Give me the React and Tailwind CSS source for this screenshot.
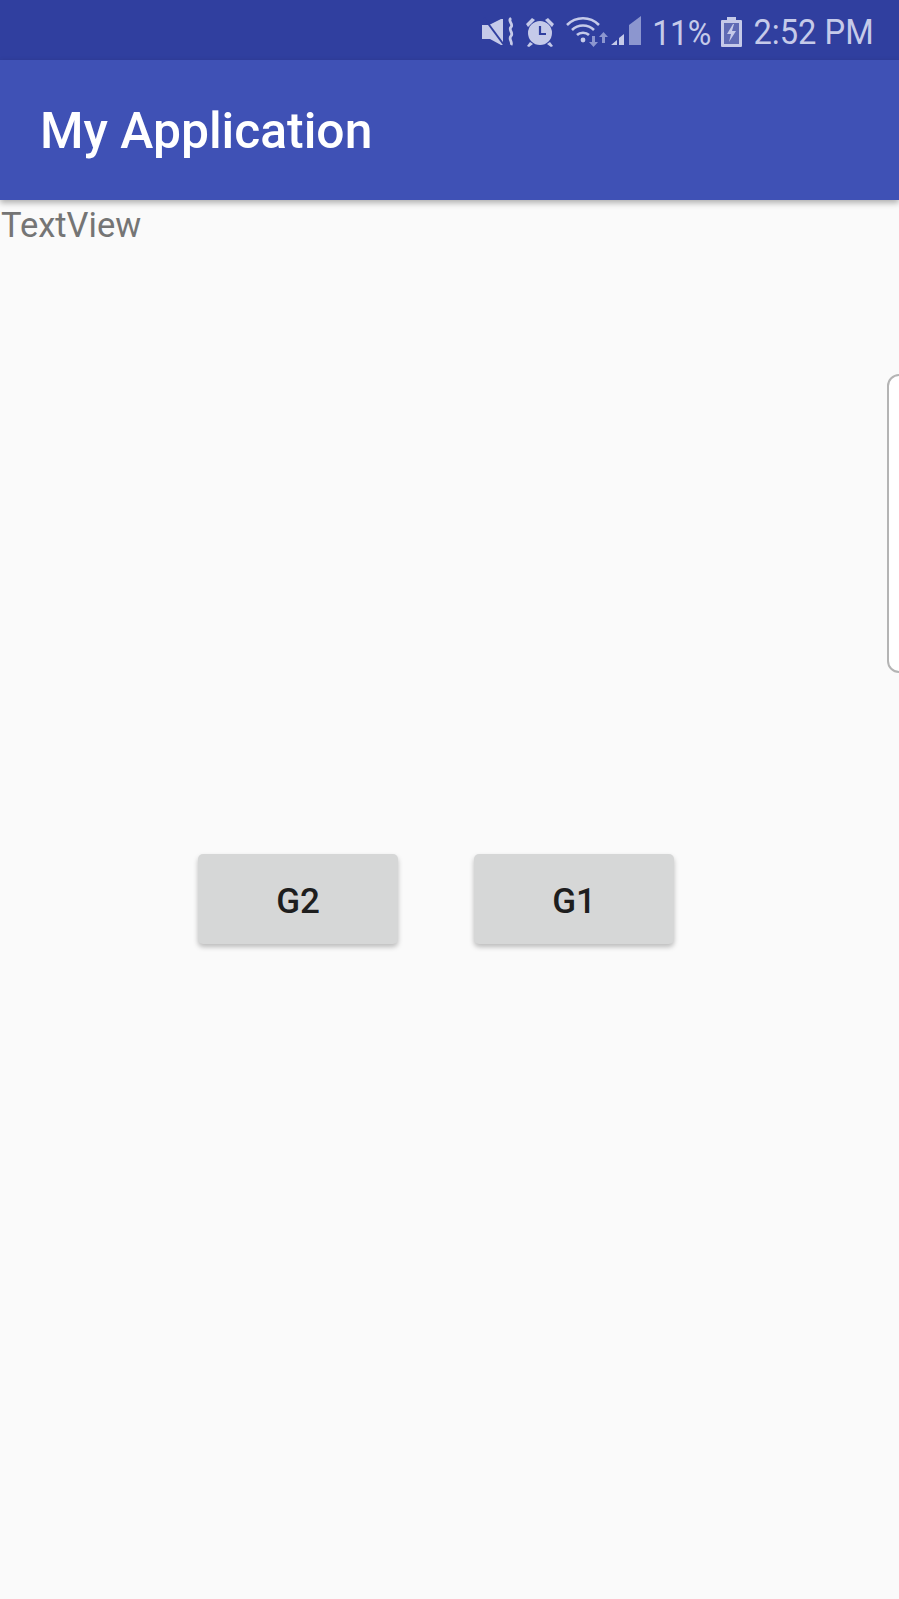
export default function App() {
  const ic = "#c5cae9";
  return (
    <div className="relative w-[899px] h-[1599px] overflow-hidden bg-[#fafafa] font-['Roboto',sans-serif]">
      <div className="h-[60px] bg-[#303f9f] flex items-center justify-end pt-[4px] pr-[25px] text-[#c5cae9]">
        <svg width="34" height="32" viewBox="0 0 34 32" className="mr-[9px]">
          <path d="M1 9h7l12-6h2v26h-2l-11-6H1z" fill={ic} />
          <path d="M3 2l20 27" fill="none" stroke="#303f9f" strokeWidth="2" />
          <path d="M30 2c-4 3 3 6 0 9s3 6 0 9 2 6 0 9" fill="none" stroke={ic} strokeWidth="2.8" />
        </svg>
        <svg width="32" height="32" viewBox="0 0 32 32" className="mr-[10px]">
          <circle cx="16" cy="17" r="12" fill={ic} />
          <path d="M16 10v8h6" fill="none" stroke="#303f9f" strokeWidth="2.2" />
          <path d="M2 8l6-6 3 2-7 7z M30 8l-6-6-3 2 7 7z M6 26l-3 4 2 1 4-3z M26 26l3 4-2 1-4-3z" fill={ic} />
        </svg>
        <svg width="48" height="32" viewBox="0 0 48 32" className="-mr-[3px]">
          <path d="M1 9C10 0 24 0 33 9" fill="none" stroke={ic} strokeWidth="2.6" />
          <path d="M6 14c6-6 16-6 22 0" fill="none" stroke={ic} strokeWidth="2.6" />
          <path d="M11 19c3-3 9-3 12 0" fill="none" stroke={ic} strokeWidth="2.6" />
          <circle cx="17" cy="24" r="2.4" fill={ic} />
          <path d="M26 20h3v6h3l-4.500 5-4.500-5h3z" fill="#8c96cf" />
          <path d="M36 27h3v-6h3l-4.500-5-4.500 5h3z" fill="#8c96cf" />
        </svg>
        <svg width="32" height="32" viewBox="0 0 32 32" className="mr-[4px]">
          <path d="M0 29l6-5v5z M8 22l5-4v11h-5z" fill={ic} />
          <path d="M18 9l12-9v29h-12z" fill="#8c96cf" />
        </svg>
        <span className="text-[35px] leading-none mt-[2px] tracking-[-0.3px] mr-[10px] scale-x-[0.92] origin-right">11%</span>
        <svg width="21" height="30" viewBox="0 0 21 30" className="mr-[1px]">
          <path d="M6 0h9v3h5a1 1 0 0 1 1 1v25a1 1 0 0 1-1 1H1a1 1 0 0 1-1-1V4a1 1 0 0 1 1-1h5z" fill={ic} />
          <rect x="3" y="6" width="15" height="21" fill="#5f6bb5" />
          <path d="M12 7l-6 10h4l-2 8 7-11h-4l2-7z" fill={ic} />
        </svg>
        <span className="text-[35.500px] leading-none mt-[2px] scale-x-[0.92] origin-right whitespace-nowrap">2:52 PM</span>
      </div>
      <div className="relative z-10 h-[140px] bg-[#3f51b5] flex items-center pl-[40px] pt-[3px] shadow-[0_3px_6px_rgba(0,0,0,0.3)]">
        <h1 className="text-[49.800px] font-medium text-white leading-none">My Application</h1>
      </div>
      <p className="text-[34.500px] leading-[48px] text-[#757575] mt-[1px] pl-[1px]">TextView</p>
      <div className="flex mt-[605px] ml-[198px] gap-[76px]">
        <button className="w-[200px] h-[90px] pt-[6px] rounded-[5px] bg-[#d6d7d7] text-[#1e1e1e] text-[35px] font-medium shadow-[0_3px_5px_rgba(0,0,0,0.25)]">G2</button>
        <button className="w-[200px] h-[90px] pt-[6px] rounded-[5px] bg-[#d6d7d7] text-[#1e1e1e] text-[35px] font-medium shadow-[0_3px_5px_rgba(0,0,0,0.25)]">G1</button>
      </div>
      <div className="absolute left-[887px] top-[374px] w-[30px] h-[299px] rounded-[12px] border-2 border-[#b4b4b4] bg-white"></div>
    </div>
  );
}
